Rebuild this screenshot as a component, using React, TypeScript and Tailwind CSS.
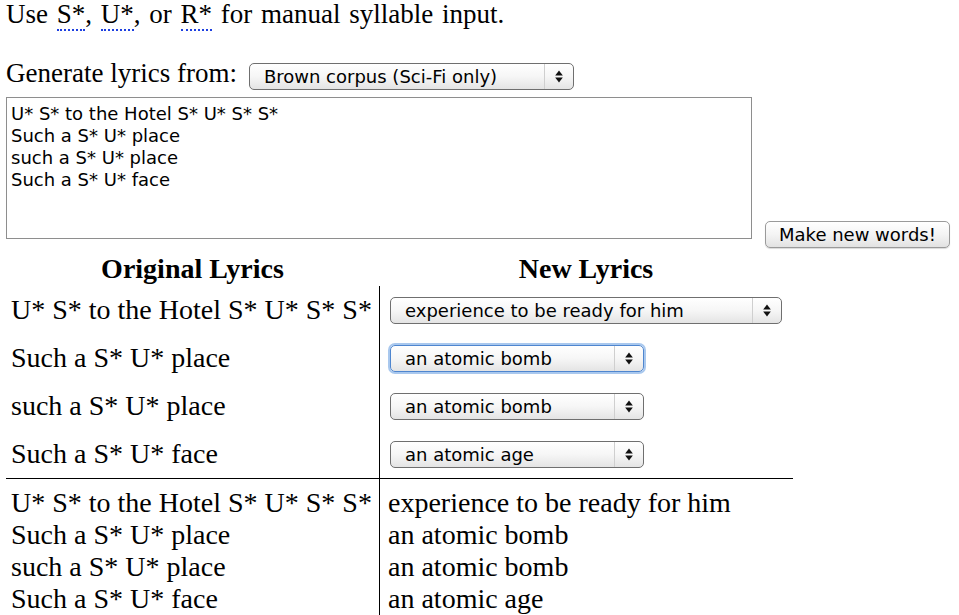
import React from 'react'

const serif = { fontFamily: '"Liberation Serif", "Times New Roman", serif' }
const sans = { fontFamily: '"DejaVu Sans", "Lucida Grande", sans-serif' }

const rows = [
  { original: 'U* S* to the Hotel S* U* S* S*', pick: 'experience to be ready for him', wide: true },
  { original: 'Such a S* U* place', pick: 'an atomic bomb', focused: true },
  { original: 'such a S* U* place', pick: 'an atomic bomb' },
  { original: 'Such a S* U* face', pick: 'an atomic age' },
]

function Arrows() {
  return (
    <svg width="8" height="13" viewBox="0 0 8 13" className="shrink-0">
      <path d="M4 0.5 L7.8 5.5 L0.2 5.5 Z" fill="#111" />
      <path d="M4 12.5 L7.8 7.5 L0.2 7.5 Z" fill="#111" />
    </svg>
  )
}

function AquaSelect({ label, width, focused }: { label: string; width: string; focused?: boolean }) {
  return (
    <div
      className={`flex h-[27px] ${width} items-stretch rounded-[5px] border bg-gradient-to-b from-white via-[#f6f6f6] to-[#e4e4e4] ${
        focused ? 'border-[#4f86cf] shadow-[0_0_0_2px_#a9c8ee]' : 'border-[#6f6f6f]'
      }`}
    >
      <span className="flex-1 truncate pl-[14px] text-[18px] leading-[25px] text-black" style={sans}>
        {label}
      </span>
      <span className="flex w-[29px] items-center justify-center border-l border-[#cfcfcf]">
        <Arrows />
      </span>
    </div>
  )
}

function Tag({ children }: { children: React.ReactNode }) {
  return <span className="border-b-2 border-dotted border-[#1d3fe0]">{children}</span>
}

export default function App() {
  return (
    <div className="min-h-[615px] bg-white pl-[6px] text-black" style={serif}>
      <p className="text-[27px] leading-[28px] [word-spacing:2px]">
        Use <Tag>S*</Tag>, <Tag>U*</Tag>, or <Tag>R*</Tag> for manual syllable input.
      </p>

      <div className="mt-[31px] flex items-start gap-[12px]">
        <span className="text-[27px] leading-[28px]">Generate lyrics from:</span>
        <div className="mt-[4px]">
          <AquaSelect label="Brown corpus (Sci-Fi only)" width="w-[325px]" />
        </div>
      </div>

      <div className="mt-[7px] flex items-start gap-[13px]">
        <div
          className="h-[142px] w-[746px] border border-[#8e8e8e] px-[4px] pt-[5px] text-[18px] leading-[22px] whitespace-pre"
          style={sans}
        >
          {'U* S* to the Hotel S* U* S* S*\nSuch a S* U* place\nsuch a S* U* place\nSuch a S* U* face'}
        </div>
        <button
          className="mt-[124px] h-[27px] w-[185px] rounded-[5px] border border-[#9a9a9a] bg-gradient-to-b from-white via-[#f4f4f4] to-[#e2e2e2] text-[18px] leading-[25px] text-black shadow-[0_1px_1px_rgba(0,0,0,0.15)]"
          style={sans}
        >
          Make new words!
        </button>
      </div>

      <div className="mt-[4px] grid w-[787px] grid-cols-[373px_414px]">
        <div className="h-[34px] text-center text-[28px] leading-[34px] font-bold">Original Lyrics</div>
        <div className="h-[34px] text-center text-[28px] leading-[34px] font-bold">New Lyrics</div>

        <div className="border-b border-black pl-[5px]">
          {rows.map((r, i) => (
            <div key={i} className="flex h-[48px] items-center text-[28px] leading-[32px]">
              {r.original}
            </div>
          ))}
        </div>
        <div className="border-b border-l border-black pl-[10px]">
          {rows.map((r, i) => (
            <div key={i} className="flex h-[48px] items-center">
              <AquaSelect label={r.pick} width={r.wide ? 'w-[392px]' : 'w-[254px]'} focused={r.focused} />
            </div>
          ))}
        </div>

        <div className="pt-[8px] pl-[5px] text-[28px] leading-[32px]">
          {rows.map((r, i) => (
            <div key={i}>{r.original}</div>
          ))}
        </div>
        <div className="border-l border-black pt-[8px] pl-[8px] text-[28px] leading-[32px]">
          {rows.map((r, i) => (
            <div key={i}>{r.pick}</div>
          ))}
        </div>
      </div>
    </div>
  )
}
